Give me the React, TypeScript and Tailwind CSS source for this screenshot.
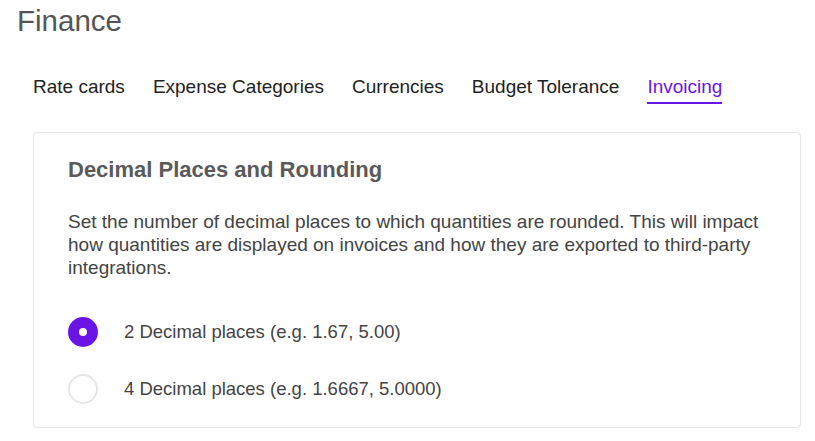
import { useState } from 'react'

const TABS = ['Rate cards', 'Expense Categories', 'Currencies', 'Budget Tolerance', 'Invoicing']

const OPTIONS = [
  { id: '2', label: '2 Decimal places (e.g. 1.67, 5.00)' },
  { id: '4', label: '4 Decimal places (e.g. 1.6667, 5.0000)' },
]

export default function App() {
  const [active] = useState('Invoicing')
  const [decimals, setDecimals] = useState('2')

  return (
    <div className="min-h-screen bg-white font-['Liberation_Sans',Arial,sans-serif]">
      <div className="pl-[17px] pr-[14px] pt-[4px]">
        <h1 className="text-[29.5px] leading-[34px] text-[#555555]">Finance</h1>

        <nav className="mt-[37px] flex gap-[28px] pl-[16px]">
          {TABS.map((tab) => (
            <button
              key={tab}
              className={[
                'relative pb-[4px] text-[19px] leading-[24px]',
                tab === active ? 'text-[#6b14e6]' : 'text-[#222222]',
              ].join(' ')}
            >
              {tab}
              {tab === active && (
                <span className="absolute bottom-[-1px] left-0 right-0 h-[2px] bg-[#6b14e6]" />
              )}
            </button>
          ))}
        </nav>

        <section className="ml-[16px] mt-[29px] rounded-[4px] border border-[#e6e6e6] px-[34px] pt-[22px] pb-[23px]">
          <h2 className="text-[22px] font-bold leading-[30px] text-[#5a5a5a]">Decimal Places and Rounding</h2>
          <p className="mt-[25px] text-[19px] leading-[23px] text-[#444444]">
            Set the number of decimal places to which quantities are rounded. This will impact how quantities are
            displayed on invoices and how they are exported to third-party integrations.
          </p>

          <div className="mt-[38px] flex flex-col gap-[27px]">
            {OPTIONS.map((opt) => {
              const checked = decimals === opt.id
              return (
                <label key={opt.id} className="flex cursor-pointer items-center gap-[26px]">
                  <span
                    onClick={() => setDecimals(opt.id)}
                    className={[
                      'flex h-[30px] w-[30px] items-center justify-center rounded-full',
                      checked ? 'bg-[#6b14e6]' : 'border-2 border-[#e6e6e6] bg-white',
                    ].join(' ')}
                  >
                    {checked && <span className="h-[8px] w-[8px] rounded-full bg-white" />}
                  </span>
                  <span className="text-[18.5px] leading-[24px] text-[#444444]">{opt.label}</span>
                </label>
              )
            })}
          </div>
        </section>
      </div>
    </div>
  )
}
